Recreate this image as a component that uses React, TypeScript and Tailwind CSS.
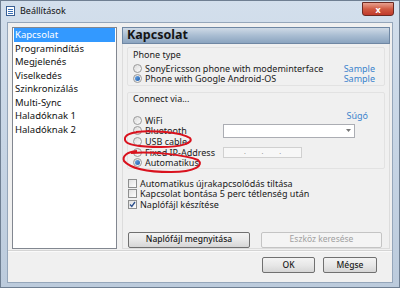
import React from "react";

const F = { fontFamily: '"Noto Sans", "Open Sans", sans-serif' };

function Radio({ checked }: { checked?: boolean }) {
  return (
    <span className="w-[9px] h-[9px] rounded-full border border-[#9a9a9a] bg-gradient-to-br from-[#dcdcdc] to-[#fbfbfb] flex items-center justify-center shrink-0">
      {checked && <span className="w-[5px] h-[5px] rounded-full bg-gradient-to-br from-[#6aa6e6] to-[#1f5fae]" />}
    </span>
  );
}

function Check({ checked }: { checked?: boolean }) {
  return (
    <span className="w-[9px] h-[9px] border border-[#8e8f8f] bg-gradient-to-br from-[#e0e0e0] to-[#fdfdfd] flex items-center justify-center shrink-0">
      {checked && (
        <svg width="7" height="7" viewBox="0 0 7 7">
          <path d="M1 3.5 L2.8 5.5 L6 1" fill="none" stroke="#2b4f8c" strokeWidth="1.3" />
        </svg>
      )}
    </span>
  );
}

function Btn({ children, w, disabled }: { children: React.ReactNode; w: string; disabled?: boolean }) {
  return (
    <div
      className={`${w} h-[16px] rounded-[2px] border flex items-center justify-center text-[8.5px] ${
        disabled
          ? "border-[#c4c4c4] bg-[#f4f4f4] text-[#a0a0a0]"
          : "border-[#707070] bg-gradient-to-b from-[#f3f3f3] via-[#e8e8e8] to-[#d6d6d6] text-[#1a1a1a] font-medium"
      }`}
    >
      {children}
    </div>
  );
}

export default function App() {
  const items = [
    "Kapcsolat",
    "Programindítás",
    "Megjelenés",
    "Viselkedés",
    "Szinkronizálás",
    "Multi-Sync",
    "Haladóknak 1",
    "Haladóknak 2",
  ];
  return (
    <div
      className="w-[400px] h-[288px] overflow-hidden relative bg-gradient-to-b from-[#d3dfec] via-[#c7d5e5] to-[#bccbdc] flex flex-col border border-[#6f7f92]"
      style={F}
    >
      {/* title bar */}
      <div className="h-[21px] flex items-start shrink-0">
        <div className="mt-[5px] ml-[5px] w-[9px] h-[10px] border border-[#3a5f93] bg-white flex flex-col justify-center gap-[1px] px-[1px]">
          <span className="h-[1px] bg-[#3a6fb5]" />
          <span className="h-[1px] bg-[#3a6fb5]" />
          <span className="h-[1px] bg-[#3a6fb5]" />
        </div>
        <div className="ml-[5px] mt-[4px] text-[9px] leading-[12px] text-[#111]">Beállítások</div>
        <div className="flex-1" />
        <div className="mt-[1px] mr-[5px] w-[32px] h-[14px] rounded-b-[3px] border border-[#6b2a22] bg-gradient-to-b from-[#e8a08f] via-[#d05a42] to-[#c0392b] flex items-center justify-center">
          <span className="text-white text-[9px] font-bold leading-none">x</span>
        </div>
      </div>

      {/* client area */}
      <div className="mx-[6px] h-[261px] bg-[#f0f0f0] border border-[#95a6ba] flex flex-col shrink-0">
        <div className="flex pl-[4px] pt-[4px] h-[227px]">
          {/* list */}
          <div className="w-[105px] h-[222px] bg-white border border-[#828790] px-[1px] text-[9.5px] text-[#111]">
            {items.map((t, i) => (
              <div
                key={t}
                className={`h-[13.5px] leading-[13.5px] pl-[1px] ${i === 0 ? "bg-[#3399ff] text-white" : ""}`}
              >
                {t}
              </div>
            ))}
          </div>
          {/* panel */}
          <div className="ml-[5px] w-[268px] h-[222px] flex flex-col">
            <div className="h-[17px] border border-[#6f87a3] bg-gradient-to-b from-[#cfdae6] via-[#a9bdd2] to-[#8ba4bf] flex items-center pl-[4px]">
              <span className="text-[12.5px] font-bold text-[#151515] leading-none">Kapcsolat</span>
            </div>
            <div className="flex-1 border-x border-b border-[#dcdcdc] px-[4px] pt-[3px] text-[9px] text-[#1a1a1a]">
              {/* phone type */}
              <div className="h-[39px] border border-[#e2e2e2] rounded-[2px] pl-[5px] pr-[9px] flex flex-col">
                <div className="h-[13px] leading-[13px]">Phone type</div>
                <div className="h-[10.5px] mt-[2px] flex items-center">
                  <Radio />
                  <span className="ml-[3px] leading-none">SonyEricsson phone with modeminterface</span>
                  <span className="flex-1" />
                  <span className="text-[#3b83cc] leading-none">Sample</span>
                </div>
                <div className="h-[10.5px] flex items-center">
                  <Radio checked />
                  <span className="ml-[3px] leading-none">Phone with Google Android-OS</span>
                  <span className="flex-1" />
                  <span className="text-[#3b83cc] leading-none">Sample</span>
                </div>
              </div>
              {/* connect via */}
              <div className="mt-[6px] h-[77px] border border-[#e2e2e2] rounded-[2px] pl-[5px] pr-[16px] flex flex-col">
                <div className="h-[12px] leading-[12px]">Connect via...</div>
                <div className="h-[11.25px] mt-[10px] flex items-center">
                  <Radio />
                  <span className="ml-[3px] leading-none">WiFi</span>
                  <span className="flex-1" />
                  <span className="text-[#3b83cc] leading-none -translate-y-[5px]">Súgó</span>
                </div>
                <div className="h-[11.25px] flex items-center">
                  <Radio />
                  <span className="ml-[3px] w-[78px] leading-none">Bluetooth</span>
                  <div className="w-[132px] h-[14px] bg-white border border-[#abadb3] flex items-center justify-end pr-[3px]">
                    <svg width="5" height="3" viewBox="0 0 5 3">
                      <path d="M0 0 L5 0 L2.5 3 Z" fill="#777" />
                    </svg>
                  </div>
                </div>
                <div className="h-[11.25px] flex items-center">
                  <Radio />
                  <span className="ml-[3px] leading-none">USB cable</span>
                </div>
                <div className="h-[11.25px] flex items-center">
                  <Radio />
                  <span className="ml-[3px] w-[78px] leading-none">Fixed IP-Address</span>
                  <div className="w-[79px] h-[11px] bg-[#f7f7f7] border border-[#d0d0d0] flex items-center justify-around px-[12px] text-[7px] text-[#999]">
                    <span>.</span>
                    <span>.</span>
                    <span>.</span>
                  </div>
                </div>
                <div className="h-[11.25px] flex items-center">
                  <Radio checked />
                  <span className="ml-[3px] leading-none">Automatikus</span>
                </div>
              </div>
              {/* checkboxes */}
              <div className="mt-[9px] pl-[1px] flex flex-col">
                <div className="h-[10.5px] flex items-center">
                  <Check />
                  <span className="ml-[3px] leading-none">Automatikus újrakapcsolódás tiltása</span>
                </div>
                <div className="h-[10.5px] flex items-center">
                  <Check />
                  <span className="ml-[3px] leading-none">Kapcsolat bontása 5 perc tétlenség után</span>
                </div>
                <div className="h-[10.5px] flex items-center">
                  <Check checked />
                  <span className="ml-[3px] leading-none">Naplófájl készítése</span>
                </div>
              </div>
              <div className="mt-[22px] pl-[1px] flex gap-[11px]">
                <Btn w="w-[122px]">Naplófájl megnyitása</Btn>
                <Btn w="w-[121px]" disabled>
                  Eszköz keresése
                </Btn>
              </div>
            </div>
          </div>
        </div>
        <div className="h-[1px] bg-[#d4d4d4]" />
        <div className="h-[1px] bg-[#fafafa]" />
        <div className="flex justify-end gap-[8px] pr-[15px] pt-[5px]">
          <Btn w="w-[53px]">OK</Btn>
          <Btn w="w-[54px]">Mégse</Btn>
        </div>
      </div>

      {/* red hand-drawn annotations */}
      <svg className="absolute inset-0 pointer-events-none" width="400" height="288" viewBox="0 0 400 288">
        <path
          d="M135 131 C150 129 180 131 189 137 C193 142 180 146 160 146 C140 146 125 144 124 139 C123 134 130 131 141 131"
          fill="none"
          stroke="#d9121e"
          strokeWidth="2"
        />
        <path
          d="M130 152 C150 150 185 154 197 159 C203 164 195 171 170 171 C150 171 130 168 123 160 C121 155 126 151 136 150"
          fill="none"
          stroke="#d9121e"
          strokeWidth="2"
        />
      </svg>
    </div>
  );
}
